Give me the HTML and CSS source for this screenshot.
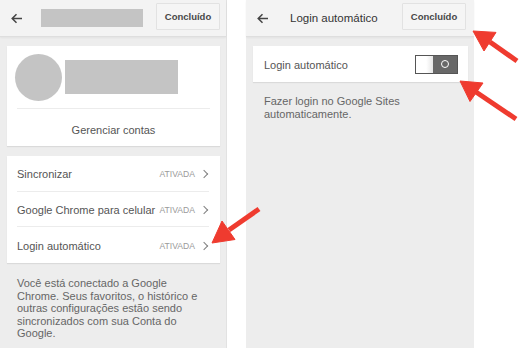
FILE: index.html
```html
<!DOCTYPE html>
<html lang="pt">
<head>
<meta charset="utf-8">
<link rel="stylesheet" href="styles.css">
</head>
<body>
<div class="stage">
  <section class="panel panel-left">
    <header class="bar">
      <svg class="back" width="12" height="11" viewBox="0 0 12 11"><path d="M11 5.5H1.5M5.5 1.2L1.2 5.5l4.3 4.3" fill="none" stroke="#444" stroke-width="1.5"/></svg>
      <div class="title-ph"></div>
      <button class="done">Concluído</button>
    </header>
    <div class="card account">
      <div class="who">
        <div class="avatar"></div>
        <div class="name-ph"></div>
      </div>
      <div class="manage">Gerenciar contas</div>
    </div>
    <div class="card list">
      <div class="row"><span class="label">Sincronizar</span><span class="state">ATIVADA</span><span class="chev"></span></div>
      <div class="row"><span class="label">Google Chrome para celular</span><span class="state">ATIVADA</span><span class="chev"></span></div>
      <div class="row"><span class="label">Login automático</span><span class="state">ATIVADA</span><span class="chev"></span></div>
    </div>
    <p class="note">Você está conectado a Google Chrome. Seus favoritos, o histórico e outras configurações estão sendo sincronizados com sua Conta do Google.</p>
  </section>
  <section class="panel panel-right">
    <header class="bar">
      <svg class="back" width="12" height="11" viewBox="0 0 12 11"><path d="M11 5.5H1.5M5.5 1.2L1.2 5.5l4.3 4.3" fill="none" stroke="#444" stroke-width="1.5"/></svg>
      <div class="title">Login automático</div>
      <button class="done">Concluído</button>
    </header>
    <div class="card single">
      <span class="label">Login automático</span>
      <span class="toggle"><span class="off"></span><span class="on"><span class="ring"></span></span></span>
    </div>
    <p class="note note-right">Fazer login no Google Sites automaticamente.</p>
  </section>
</div>
<svg class="arrows" width="519" height="348" viewBox="0 0 519 348">
  <g fill="#ef3b2f" stroke="#ef3b2f">
    <line x1="259" y1="209" x2="229" y2="230" stroke-width="5"/>
    <polygon points="212,243 235,239.5 222,221" stroke-width="1"/>
    <line x1="517" y1="61" x2="490" y2="42" stroke-width="5"/>
    <polygon points="473,31 496,32.4 484,51" stroke-width="1"/>
    <line x1="516" y1="119" x2="476" y2="92" stroke-width="5"/>
    <polygon points="460,81 483,83 470,101.5" stroke-width="1"/>
  </g>
</svg>
</body>
</html>
```
FILE: styles.css
```css
* { box-sizing: border-box; }
html, body { margin: 0; padding: 0; background: #fff; }
body {
  width: 519px; height: 348px; overflow: hidden; position: relative;
  font-family: "Liberation Sans", Arial, sans-serif; color: #555;
}
.stage { display: flex; gap: 19px; height: 348px; }
.panel { background: #ededed; height: 348px; display: flex; flex-direction: column; }
.panel-left { width: 227px; border-right: 1px solid #e2e2e2; }
.panel-right { width: 228px; }
.bar {
  height: 37px; flex: none; background: #f3f3f3;
  border-bottom: 1px solid #dedede;
  box-shadow: 0 1px 2px rgba(0,0,0,0.05);
  display: flex; align-items: center; padding: 0 6px 0 11px;
  margin-bottom: 9px;
}
.back { flex: none; margin-top: 1px; }
.title-ph { width: 102px; height: 18px; background: #c4c4c4; margin-left: 18px; }
.title { margin-left: 21px; font-size: 11.5px; color: #333; }
.done {
  margin-left: auto; width: 64px; height: 27px; margin-top: -3px;
  background: #f5f5f5; border: 1px solid #e2e2e2; border-radius: 1px;
  font-family: "Liberation Sans", Arial, sans-serif; font-size: 9.5px; font-weight: bold;
  color: #484848; padding: 0;
}
.panel-right .bar { padding-right: 8px; }
.card {
  background: #fff; margin: 0 6px 0 7px;
  box-shadow: 0 1px 1px rgba(0,0,0,0.08);
}
.account { padding: 8px 10px 0 8px; height: 100px; }
.who { display: flex; align-items: center; gap: 3px; border-bottom: 1px solid #ececec; height: 55px; padding-bottom: 8px; margin-left: 2px; }
.avatar { width: 47px; height: 47px; border-radius: 50%; background: #c4c4c4; margin-left: -2px; }
.name-ph { width: 113px; height: 34px; background: #c4c4c4; }
.manage { text-align: center; font-size: 11px; line-height: 36px; color: #555; padding: 3px 0 0 2px; }
.list { margin-top: 10px; padding: 0 11px 0 10px; }
.row {
  height: 35.7px; display: flex; align-items: center;
  border-bottom: 1px solid #ececec; padding-top: 2px;
}
.row:last-child { border-bottom: none; }
.label { font-size: 11px; color: #555; flex: 1; white-space: nowrap; }
.state { font-size: 8.6px; color: #9a9a9a; margin-right: 6px; }
.chev {
  width: 6px; height: 6px; border-top: 1px solid #808080; border-right: 1px solid #808080;
  transform: rotate(45deg); margin-right: 2px;
}
.note {
  margin: 14px 0 0 0; padding: 0 20px 0 17px; font-size: 11px; line-height: 12.6px; color: #666;
}
.single { height: 36px; display: flex; align-items: center; padding: 0 10px 0 11px; }
.single .label { padding-top: 1px; }
.toggle {
  display: flex; width: 43px; height: 19px; border: 1px solid #555;
}
.toggle .off { width: 17px; background: linear-gradient(90deg, #fff 0%, #fff 60%, #e6e6e6 100%); }
.toggle .on { flex: 1; background: #686868; display: flex; align-items: center; justify-content: center; }
.ring { width: 8px; height: 8px; border: 1.5px solid #fff; border-radius: 50%; }
.note-right { margin-top: 13px; padding-left: 18px; }
.arrows { position: absolute; left: 0; top: 0; pointer-events: none; }
```
